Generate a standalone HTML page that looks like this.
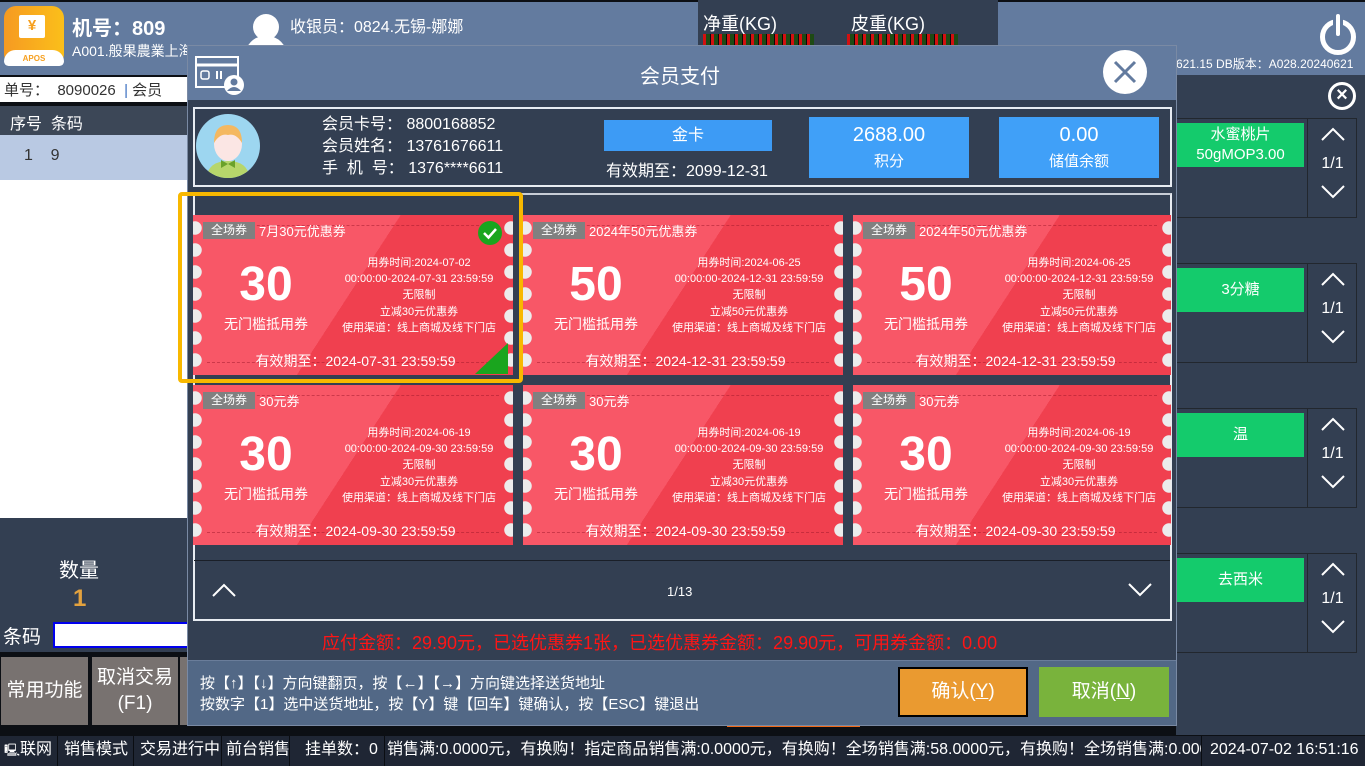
<!DOCTYPE html>
<html><head><meta charset="utf-8"><style>
*{margin:0;padding:0;box-sizing:border-box}
html,body{width:1365px;height:766px;overflow:hidden}
body{background:#0c0f14;font-family:"Liberation Sans","Noto Sans CJK SC",sans-serif;color:#fff;position:relative}
.a{position:absolute;white-space:nowrap}
.card{position:absolute;width:320px;height:160px;overflow:hidden;background:linear-gradient(123deg,#f85767 49%,#f0404f 49%)}
.card .l{position:absolute;left:0;top:0;width:10px;height:160px;background:radial-gradient(circle at 2px 11px,#ececec 6.5px,transparent 7px) 0 2px/10px 22px repeat-y}
.card .r{position:absolute;right:0;top:0;width:10px;height:160px;background:radial-gradient(circle at 8px 11px,#ececec 6.5px,transparent 7px) 0 2px/10px 22px repeat-y}
.card .d1,.card .d2{position:absolute;left:14px;right:14px;border-top:1px dashed rgba(150,20,40,.45)}
.card .d1{top:10px}.card .d2{top:147px}
.tag{position:absolute;left:10px;top:7px;width:52px;height:17px;background:#808080;font-size:12px;line-height:17px;text-align:center}
.tt{position:absolute;left:66px;top:6px;font-size:13px}
.big{position:absolute;left:23px;width:100px;text-align:center;top:40px;font-size:48px;font-weight:bold;line-height:60px}
.sub{position:absolute;left:23px;width:100px;text-align:center;top:99px;font-size:14px}
.info{position:absolute;left:136px;width:180px;text-align:center;top:40px;font-size:11px;line-height:16.2px}
.exp{position:absolute;left:0;width:325px;text-align:center;top:136px;font-size:14px}
.grp{position:absolute;left:1176px;width:181px;border:1px solid #22272e;height:100px}
.grn{position:absolute;left:1177px;width:127px;height:44px;background:#14cb6c;text-align:center;font-size:15px}
.arr{position:absolute;left:1307px;width:50px;height:100px;border-left:1px solid #22272e;text-align:center}
.arr svg{display:block;margin:0 auto}
.arr div{font-size:16px;line-height:20px;margin:6px 0}
.st{position:absolute;top:736px;height:30px;line-height:28px;font-size:16px;border-right:1px solid #0a0d12;white-space:nowrap;overflow:hidden}
</style></head><body>
<!-- header -->
<div class="a" style="left:0;top:2px;width:1365px;height:73px;background:#637b9f"></div>
<div class="a" style="left:4px;top:6px;width:60px;height:60px;border-radius:12px;background:linear-gradient(90deg,#f69a22,#fbbf1a)"></div>
<div class="a" style="left:4px;top:50px;width:60px;height:16px;border-radius:30px 30px 12px 12px;background:#fff;color:#f6a020;font-size:8px;font-weight:bold;text-align:center;line-height:17px">APOS</div>
<div class="a" style="left:19px;top:15px;width:26px;height:23px;background:#fff;border-radius:2px;color:#f6a020;font-size:15px;text-align:center;line-height:22px;font-weight:bold">¥</div>
<div class="a" style="left:72px;top:12px;font-size:20px;font-weight:bold">机号：809</div>
<div class="a" style="left:72px;top:41px;font-size:14px">A001.般果農業上海</div>
<div class="a" style="left:253px;top:14px;width:26px;height:26px;border-radius:50%;background:#fff"></div>
<div class="a" style="left:245px;top:36px;width:42px;height:30px;border-radius:20px 20px 0 0;background:#fff"></div>
<div class="a" style="left:290px;top:13px;font-size:16px">收银员：0824.无锡-娜娜</div>
<div class="a" style="left:698px;top:0;width:300px;height:45px;background:#333f52"></div>
<div class="a" style="left:703px;top:10px;font-size:18px">净重(KG)</div>
<div class="a" style="left:851px;top:10px;font-size:18px">皮重(KG)</div>
<div class="a" style="left:703px;top:34px;width:111px;height:11px;background:repeating-linear-gradient(90deg,#d31010 0 3px,#1e4a14 3px 4px,#1e4a14 4px 7px,#0a0a0a 7px 8px)"></div>
<div class="a" style="left:847px;top:34px;width:111px;height:11px;background:repeating-linear-gradient(90deg,#d31010 0 3px,#1e4a14 3px 4px,#1e4a14 4px 7px,#0a0a0a 7px 8px)"></div>
<div class="a" style="left:1320px;top:19px;width:36px;height:36px;border-radius:50%;border:5px solid #fff"></div>
<div class="a" style="left:1333px;top:14px;width:10px;height:24px;background:#637b9f"></div>
<div class="a" style="left:1336px;top:14px;width:4px;height:22px;background:#fff;border-radius:2px"></div>
<div class="a" style="left:1176px;top:55px;font-size:12px">621.15 DB版本：A028.20240621</div>
<!-- left -->
<div class="a" style="left:0;top:77px;width:190px;height:25px;background:#fff;color:#333;font-size:15px;padding:2px 4px">单号：&nbsp; 8090026 &nbsp;<span style="color:#3a6fc0">|</span> 会员</div>
<div class="a" style="left:0;top:106px;width:190px;height:30px;background:#3c4757;font-size:16px;padding:4px 10px">序号&nbsp; 条码</div>
<div class="a" style="left:0;top:135px;width:190px;height:45px;background:#b9c9e3;color:#333;font-size:16px;padding:12px 24px">1&nbsp;&nbsp;&nbsp; 9</div>
<div class="a" style="left:0;top:180px;width:190px;height:338px;background:#fff"></div>
<div class="a" style="left:0;top:518px;width:190px;height:100px;background:#333f52"></div>
<div class="a" style="left:59px;top:554px;font-size:20px">数量</div>
<div class="a" style="left:73px;top:585px;font-size:24px;font-weight:bold;color:#e3a23e">1</div>
<div class="a" style="left:0;top:618px;width:190px;height:34px;background:#333f52"></div>
<div class="a" style="left:3px;top:622px;font-size:19px">条码</div>
<div class="a" style="left:53px;top:622px;width:140px;height:26px;background:#fff;border:2px solid #0000ee"></div>
<div class="a" style="left:1px;top:657px;width:87px;height:68px;background:#787270;font-size:19px;text-align:center;line-height:68px">常用功能</div>
<div class="a" style="left:92px;top:657px;width:86px;height:68px;background:#787270;font-size:19px;text-align:center;line-height:26px;padding-top:8px">取消交易<br>(F1)</div>
<div class="a" style="left:180px;top:657px;width:10px;height:68px;background:#787270"></div>
<div class="a" style="left:727px;top:722px;width:133px;height:5px;background:#f26a1a"></div>
<!-- right panel -->
<div class="a" style="left:1176px;top:75px;width:189px;height:660px;background:#333f52"></div>
<div class="a" style="left:1328px;top:82px;width:28px;height:28px;border-radius:50%;border:3px solid #fff;font-size:20px;text-align:center;line-height:21px;font-weight:bold">×</div>
<div class="grp" style="top:118px"></div><div class="grp" style="top:263px"></div><div class="grp" style="top:408px"></div><div class="grp" style="top:553px"></div>
<div class="grn" style="top:123px;line-height:20px;padding-top:2px">水蜜桃片<br>50gMOP3.00</div>
<div class="grn" style="top:268px;line-height:44px">3分糖</div>
<div class="grn" style="top:413px;line-height:44px">温</div>
<div class="grn" style="top:558px;line-height:44px">去西米</div>
<div class="arr" style="top:118px"><svg width="30" height="30" viewBox="0 0 30 30"><path d="M4 22 L15 11 L26 22" stroke="#fff" stroke-width="2" fill="none"/></svg><div>1/1</div><svg width="30" height="24" viewBox="0 0 30 24"><path d="M4 6 L15 17 L26 6" stroke="#fff" stroke-width="2" fill="none"/></svg></div>
<div class="arr" style="top:263px"><svg width="30" height="30" viewBox="0 0 30 30"><path d="M4 22 L15 11 L26 22" stroke="#fff" stroke-width="2" fill="none"/></svg><div>1/1</div><svg width="30" height="24" viewBox="0 0 30 24"><path d="M4 6 L15 17 L26 6" stroke="#fff" stroke-width="2" fill="none"/></svg></div>
<div class="arr" style="top:408px"><svg width="30" height="30" viewBox="0 0 30 30"><path d="M4 22 L15 11 L26 22" stroke="#fff" stroke-width="2" fill="none"/></svg><div>1/1</div><svg width="30" height="24" viewBox="0 0 30 24"><path d="M4 6 L15 17 L26 6" stroke="#fff" stroke-width="2" fill="none"/></svg></div>
<div class="arr" style="top:553px"><svg width="30" height="30" viewBox="0 0 30 30"><path d="M4 22 L15 11 L26 22" stroke="#fff" stroke-width="2" fill="none"/></svg><div>1/1</div><svg width="30" height="24" viewBox="0 0 30 24"><path d="M4 6 L15 17 L26 6" stroke="#fff" stroke-width="2" fill="none"/></svg></div>
<!-- modal -->
<div class="a" style="left:187px;top:45px;width:990px;height:681px;background:#333f52;border:1px solid #7a8aa4"></div>
<div class="a" style="left:188px;top:46px;width:988px;height:54px;background:#637b9f"></div>
<svg class="a" style="left:194px;top:55px" width="52" height="42" viewBox="0 0 52 42"><rect x="2" y="2" width="42" height="30" fill="none" stroke="#fff" stroke-width="2"/><line x1="2" y1="10" x2="44" y2="10" stroke="#fff" stroke-width="3"/><rect x="7" y="16" width="8" height="8" rx="2" fill="none" stroke="#fff" stroke-width="1.5"/><line x1="23" y1="16" x2="23" y2="24" stroke="#fff" stroke-width="2"/><line x1="27" y1="16" x2="27" y2="24" stroke="#fff" stroke-width="2"/><circle cx="40" cy="30" r="10" fill="#fff"/><circle cx="40" cy="27" r="3.5" fill="#637b9f"/><path d="M33 36 Q40 28 47 36 Z" fill="#637b9f"/></svg>
<div class="a" style="left:640px;top:60px;font-size:20px">会员支付</div>
<div class="a" style="left:1103px;top:50px;width:44px;height:44px;border-radius:50%;background:#fff"></div>
<svg class="a" style="left:1103px;top:50px" width="44" height="44" viewBox="0 0 44 44"><path d="M12 12 L32 32 M32 12 L12 32" stroke="#637b9f" stroke-width="3"/></svg>
<div class="a" style="left:193px;top:107px;width:979px;height:80px;border:2px solid #e8ecf2"></div>
<svg class="a" style="left:196px;top:113px" width="66" height="66" viewBox="0 0 66 66"><circle cx="32" cy="33" r="32" fill="#9dd6f0"/><clipPath id="c"><circle cx="32" cy="33" r="32"/></clipPath><g clip-path="url(#c)"><path d="M10 66 Q12 48 32 48 Q52 48 54 66Z" fill="#b7d66b"/><ellipse cx="32" cy="31" rx="14" ry="17" fill="#fbe6e4"/><path d="M18 30 Q18 12 32 12 Q46 12 46 30 Q40 20 32 22 Q24 20 18 30Z" fill="#f4b860"/><path d="M25 47 L32 51 L39 47 L39 55 L32 51 L25 55Z" fill="#6aa12a"/></g></svg>
<div class="a" style="left:322px;top:114px;font-size:16px;line-height:22px">会员卡号：&nbsp;8800168852<br>会员姓名：&nbsp;13761676611<br>手&nbsp; 机&nbsp; 号：&nbsp;1376****6611</div>
<div class="a" style="left:604px;top:120px;width:168px;height:31px;background:#3d9bf5;font-size:16px;text-align:center;line-height:31px">金卡</div>
<div class="a" style="left:606px;top:157px;font-size:16px">有效期至：2099-12-31</div>
<div class="a" style="left:809px;top:117px;width:160px;height:61px;background:#40a0f8;text-align:center;font-size:20px;line-height:36px">2688.00<div style="font-size:15px;line-height:18px">积分</div></div>
<div class="a" style="left:999px;top:117px;width:160px;height:61px;background:#40a0f8;text-align:center;font-size:20px;line-height:36px">0.00<div style="font-size:15px;line-height:18px">储值余额</div></div>
<div class="a" style="left:193px;top:193px;width:979px;height:428px;border:2px solid #e8ecf2;border-top-color:#c8cdd6"></div>
<div class="a" style="left:194px;top:560px;width:976px;height:1px;background:#1a1f28"></div>
<svg class="a" style="left:210px;top:580px" width="28" height="20" viewBox="0 0 28 20"><path d="M3 16 L14 5 L25 16" stroke="#fff" stroke-width="2" fill="none"/></svg>
<div class="a" style="left:667px;top:584px;font-size:13px">1/13</div>
<svg class="a" style="left:1126px;top:580px" width="28" height="20" viewBox="0 0 28 20"><path d="M3 4 L14 15 L25 4" stroke="#fff" stroke-width="2" fill="none"/></svg>

<div class="card" style="left:193px;top:215px"><div class="l"></div><div class="r"></div><div class="d1"></div><div class="d2"></div><div class="tag">全场券</div><div class="tt">7月30元优惠券</div><div class="big">30</div><div class="sub">无门槛抵用券</div><div class="info">用券时间:2024-07-02<br>00:00:00-2024-07-31 23:59:59<br>无限制<br>立减30元优惠券<br>使用渠道：线上商城及线下门店</div><div class="exp">有效期至：2024-07-31 23:59:59</div>
<div style="position:absolute;left:282px;top:128px;width:0;height:0;border-left:33px solid transparent;border-bottom:31px solid #1aa51e"></div>
<div style="position:absolute;left:285px;top:6px;width:24px;height:24px;border-radius:50%;background:#1aa51e"></div>
<svg style="position:absolute;left:285px;top:6px" width="24" height="24" viewBox="0 0 24 24"><path d="M6 12 L10.5 16.5 L18 8" stroke="#fff" stroke-width="2.5" fill="none"/></svg></div>
<div class="card" style="left:523px;top:215px"><div class="l"></div><div class="r"></div><div class="d1"></div><div class="d2"></div><div class="tag">全场券</div><div class="tt">2024年50元优惠券</div><div class="big">50</div><div class="sub">无门槛抵用券</div><div class="info">用券时间:2024-06-25<br>00:00:00-2024-12-31 23:59:59<br>无限制<br>立减50元优惠券<br>使用渠道：线上商城及线下门店</div><div class="exp">有效期至：2024-12-31 23:59:59</div></div>
<div class="card" style="left:853px;top:215px;width:318px"><div class="l"></div><div class="r"></div><div class="d1"></div><div class="d2"></div><div class="tag">全场券</div><div class="tt">2024年50元优惠券</div><div class="big">50</div><div class="sub">无门槛抵用券</div><div class="info">用券时间:2024-06-25<br>00:00:00-2024-12-31 23:59:59<br>无限制<br>立减50元优惠券<br>使用渠道：线上商城及线下门店</div><div class="exp">有效期至：2024-12-31 23:59:59</div></div>
<div class="card" style="left:193px;top:385px"><div class="l"></div><div class="r"></div><div class="d1"></div><div class="d2"></div><div class="tag">全场券</div><div class="tt">30元券</div><div class="big">30</div><div class="sub">无门槛抵用券</div><div class="info">用券时间:2024-06-19<br>00:00:00-2024-09-30 23:59:59<br>无限制<br>立减30元优惠券<br>使用渠道：线上商城及线下门店</div><div class="exp">有效期至：2024-09-30 23:59:59</div></div>
<div class="card" style="left:523px;top:385px"><div class="l"></div><div class="r"></div><div class="d1"></div><div class="d2"></div><div class="tag">全场券</div><div class="tt">30元券</div><div class="big">30</div><div class="sub">无门槛抵用券</div><div class="info">用券时间:2024-06-19<br>00:00:00-2024-09-30 23:59:59<br>无限制<br>立减30元优惠券<br>使用渠道：线上商城及线下门店</div><div class="exp">有效期至：2024-09-30 23:59:59</div></div>
<div class="card" style="left:853px;top:385px;width:318px"><div class="l"></div><div class="r"></div><div class="d1"></div><div class="d2"></div><div class="tag">全场券</div><div class="tt">30元券</div><div class="big">30</div><div class="sub">无门槛抵用券</div><div class="info">用券时间:2024-06-19<br>00:00:00-2024-09-30 23:59:59<br>无限制<br>立减30元优惠券<br>使用渠道：线上商城及线下门店</div><div class="exp">有效期至：2024-09-30 23:59:59</div></div>
<div class="a" style="left:178px;top:192px;width:345px;height:191px;border:4px solid #f8b800;border-radius:4px"></div>

<div class="a" style="left:322px;top:629px;font-size:18px;color:#ff1515">应付金额：29.90元，已选优惠券1张，已选优惠券金额：29.90元，可用券金额：0.00</div>
<div class="a" style="left:188px;top:660px;width:988px;height:65px;background:#526886;border-top:1px solid #6a7d9a"></div>
<div class="a" style="left:200px;top:673px;font-size:15px;line-height:21px">按【↑】【↓】方向键翻页，按【←】【→】方向键选择送货地址<br>按数字【1】选中送货地址，按【Y】键【回车】键确认，按【ESC】键退出</div>
<div class="a" style="left:898px;top:667px;width:130px;height:50px;background:#ea9a30;border:2px solid #000;font-size:19px;text-align:center;line-height:46px">确认(<u>Y</u>)</div>
<div class="a" style="left:1039px;top:667px;width:130px;height:50px;background:#79b33c;font-size:19px;text-align:center;line-height:50px">取消(<u>N</u>)</div>
<!-- status bar -->
<div class="a" style="left:0;top:736px;width:1365px;height:30px;background:#1f2634"></div>
<div class="st" style="left:0;width:58px;padding-left:4px"><span style="font-size:12px">🖳</span>联网</div>
<div class="st" style="left:58px;width:76px;padding-left:6px">销售模式</div>
<div class="st" style="left:134px;width:88px;padding-left:6px">交易进行中</div>
<div class="st" style="left:222px;width:68px;padding-left:4px">前台销售</div>
<div class="st" style="left:290px;width:95px;padding-left:15px">挂单数：0</div>
<div class="st" style="left:385px;width:817px;padding-left:2px">销售满:0.0000元，有换购！指定商品销售满:0.0000元，有换购！全场销售满:58.0000元，有换购！全场销售满:0.000</div>
<div class="st" style="left:1202px;width:163px;padding-left:8px;border:0">2024-07-02 16:51:16</div>
</body></html>
